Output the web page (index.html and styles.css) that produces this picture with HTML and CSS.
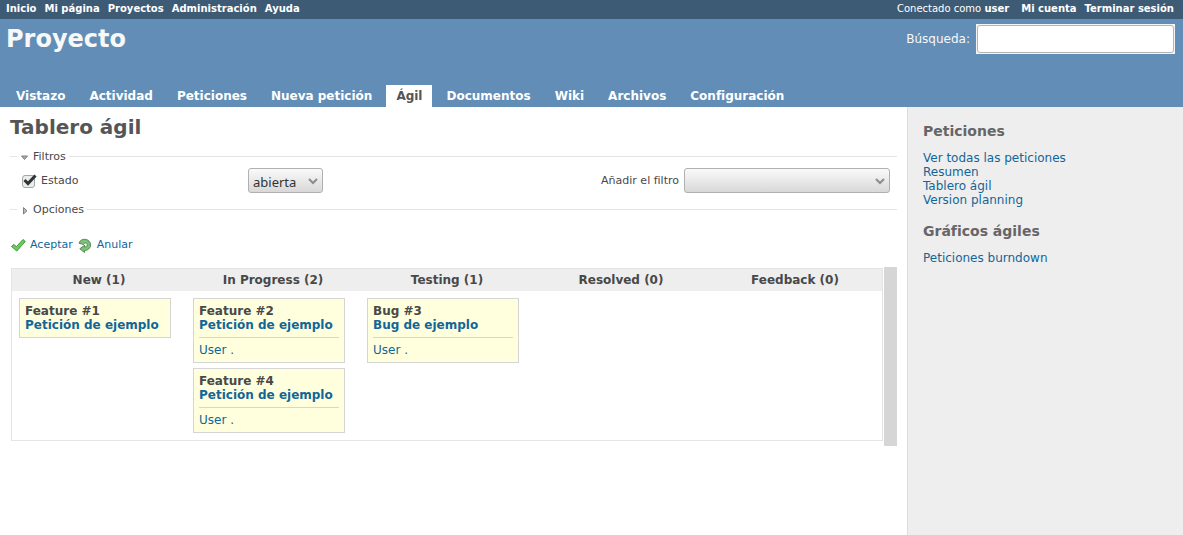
FILE: index.html
```html
<!DOCTYPE html>
<html lang="es">
<head>
<meta charset="utf-8">
<title>Tablero ágil - Proyecto</title>
<link rel="stylesheet" href="styles.css">
</head>
<body>
<nav class="top-menu">
  <ul class="menu-links">
    <li><a href="#">Inicio</a></li>
    <li><a href="#">Mi página</a></li>
    <li><a href="#">Proyectos</a></li>
    <li><a href="#">Administración</a></li>
    <li><a href="#">Ayuda</a></li>
  </ul>
  <div class="account">
    <span class="logged-as">Conectado como <a href="#">user</a></span>
    <ul class="menu-links">
      <li><a href="#">Mi cuenta</a></li>
      <li><a href="#">Terminar sesión</a></li>
    </ul>
  </div>
</nav>
<header class="header">
  <div class="header-row">
    <h1>Proyecto</h1>
    <form class="search">
      <label for="q">Búsqueda:</label>
      <span class="search-frame"><input id="q" type="text"></span>
    </form>
  </div>
  <nav>
    <ul class="tabs">
      <li><a href="#">Vistazo</a></li>
      <li><a href="#">Actividad</a></li>
      <li><a href="#">Peticiones</a></li>
      <li><a href="#">Nueva petición</a></li>
      <li><a href="#" class="selected">Ágil</a></li>
      <li><a href="#">Documentos</a></li>
      <li><a href="#">Wiki</a></li>
      <li><a href="#">Archivos</a></li>
      <li><a href="#">Configuración</a></li>
    </ul>
  </nav>
</header>
<div class="main">
  <main class="content">
    <h2>Tablero ágil</h2>
    <form>
      <fieldset class="filters">
        <legend>
          <svg width="9" height="10" viewBox="0 0 9 10"><path d="M1.500 4H7.500L4.500 7.500Z" fill="#aaa" stroke="#808080" stroke-width="1"/></svg>
          Filtros
        </legend>
        <div class="filter-row">
          <div class="filter-name">
            <span class="check">
              <input type="checkbox" id="estado" checked>
              <svg width="16" height="14" viewBox="0 0 16 14"><path d="M3.500 6L7 9.500L14.500 1.500" fill="none" stroke="#2e3436" stroke-width="3"/></svg>
            </span>
            <label for="estado">Estado</label>
          </div>
          <span class="select-box">
            <select class="value" aria-label="Estado"><option>abierta</option></select>
            <svg width="10" height="7" viewBox="0 0 10 7"><path d="M1 1L5 5L9 1" fill="none" stroke="#8b8d8c" stroke-width="2"/></svg>
          </span>
          <div class="add-filter">
            <label for="add">Añadir el filtro</label>
            <span class="select-box">
              <select id="add" class="add"><option></option></select>
              <svg width="10" height="7" viewBox="0 0 10 7"><path d="M1 1L5 5L9 1" fill="none" stroke="#8b8d8c" stroke-width="2"/></svg>
            </span>
          </div>
        </div>
      </fieldset>
      <fieldset class="options">
        <legend>
          <svg width="9" height="10" viewBox="0 0 9 10"><path d="M3.500 2.500V9L7 5.800Z" fill="#bbb" stroke="#808080" stroke-width="1"/></svg>
          Opciones
        </legend>
      </fieldset>
      <p class="buttons">
        <a href="#"><svg width="16" height="16" viewBox="0 0 16 16"><path d="M1.500 9.500L3.500 7.500L6.500 9.500L13 2.500L15.300 4.500L6.800 14Z" fill="#6ccb60" stroke="#3f9a3b" stroke-width="1" stroke-linejoin="round"/></svg>Aceptar</a>
        <a href="#"><svg width="16" height="16" viewBox="0 0 16 16"><path d="M2 6.200C3.500 0.500 13.500 1 13.500 8C13.500 11.500 10.500 13.500 7.500 13.500V15.500L2.800 11.800L7.500 8.200V10C9 10 10.200 9.300 10.200 7.800C10.200 5.500 7.500 5.500 6.500 7.500Z" fill="#82bd80" stroke="#4c8f4c" stroke-width="1" stroke-linejoin="round"/></svg>Anular</a>
      </p>
    </form>
    <div class="board-scroll">
      <div class="board-frame">
        <table class="board">
          <thead>
            <tr><th>New (1)</th><th>In Progress (2)</th><th>Testing (1)</th><th>Resolved (0)</th><th>Feedback (0)</th></tr>
          </thead>
          <tbody>
            <tr>
              <td>
                <article class="card"><h4>Feature #1</h4><a class="subject" href="#">Petición de ejemplo</a></article>
              </td>
              <td>
                <article class="card"><h4>Feature #2</h4><a class="subject" href="#">Petición de ejemplo</a><p class="user"><a href="#">User .</a></p></article>
                <article class="card"><h4>Feature #4</h4><a class="subject" href="#">Petición de ejemplo</a><p class="user"><a href="#">User .</a></p></article>
              </td>
              <td>
                <article class="card"><h4>Bug #3</h4><a class="subject" href="#">Bug de ejemplo</a><p class="user"><a href="#">User .</a></p></article>
              </td>
              <td></td>
              <td></td>
            </tr>
          </tbody>
        </table>
      </div>
      <div class="scroll-track"></div>
    </div>
  </main>
  <aside class="sidebar">
    <h3>Peticiones</h3>
    <ul>
      <li><a href="#">Ver todas las peticiones</a></li>
      <li><a href="#">Resumen</a></li>
      <li><a href="#">Tablero ágil</a></li>
      <li><a href="#">Version planning</a></li>
    </ul>
    <h3>Gráficos ágiles</h3>
    <ul>
      <li><a href="#">Peticiones burndown</a></li>
    </ul>
  </aside>
</div>
</body>
</html>
```

FILE: styles.css
```css
* { box-sizing: border-box; }
body {
  margin: 0;
  min-height: 100vh;
  display: flex;
  flex-direction: column;
  font: 12px/14px "DejaVu Sans", Verdana, sans-serif;
  color: #484848;
  background: #fff;
}
h1, h2, h3, h4, p, ul { margin: 0; padding: 0; }
ul { list-style: none; }
a { color: #169; text-decoration: none; }
svg { flex: none; }
input, select { font: inherit; color: #2e3436; }

.top-menu {
  display: flex;
  justify-content: space-between;
  height: 19px;
  padding: 2px 9px 0 6px;
  background: #3e5b76;
  color: #fff;
  font-size: 10px;
}
.top-menu a { color: #fff; font-weight: bold; }
.menu-links { display: flex; gap: 8px; }
.account { display: flex; gap: 12px; }

.header {
  display: flex;
  flex-direction: column;
  justify-content: space-between;
  height: 88px;
  background: #628db6;
  color: #f8f8f8;
}
.header-row {
  display: flex;
  justify-content: space-between;
  padding: 5px 8px 0 6px;
}
h1 { font-size: 24px; line-height: 30px; }
.search { display: flex; gap: 6px; }
.search label { line-height: 30px; }
.search-frame { padding: 1px; background: #f4f4f4; height: 30px; }
.search input {
  width: 197px;
  height: 28px;
  border: 1px solid #b4b4b0;
  border-radius: 3px;
  background: #fff;
}
.tabs { display: flex; gap: 4px; padding-left: 6px; }
.tabs a {
  display: block;
  padding: 4px 10px;
  color: #fff;
  font-weight: bold;
}
.tabs .selected { background: #fff; color: #555; }

.main { display: flex; flex: 1; }
.content { flex: 1; min-width: 0; padding: 6px 10px 10px; }
h2 { font-size: 20px; line-height: 28px; color: #555; }

fieldset {
  margin: 0;
  padding: 0 7px 0 11px;
  min-width: 0;
  border: 0;
  border-top: 1px solid #e4e4e4;
  font-size: 11px;
}
legend {
  display: flex;
  align-items: center;
  gap: 4px;
  margin-left: -4px;
  padding: 1px 3px 0;
}
.filters { margin-top: 8px; }
.options { margin-top: 9px; }
.filter-row { display: flex; align-items: center; padding-top: 4px; }
.filter-name { display: flex; align-items: center; gap: 4px; width: 227px; }
.check { position: relative; display: flex; width: 16px; height: 14px; }
.check input {
  appearance: none;
  width: 13px;
  height: 13px;
  margin: 1px;
  border: 1px solid #a6a6a6;
  border-radius: 3px;
  background: #ececec;
}
.check svg { position: absolute; left: 0; top: 0; pointer-events: none; }
.select-box { position: relative; display: flex; }
.select-box svg { position: absolute; right: 5px; top: 10px; pointer-events: none; }
select {
  appearance: none;
  height: 25px;
  margin: 0;
  padding: 3px 4px 0;
  border: 1px solid #b0b0b0;
  border-radius: 3px;
  background: linear-gradient(#fafafa, #d8d8d8);
  font-family: "Noto Sans", sans-serif;
  font-size: 13px;
}
.value { width: 75px; }
.add { width: 206px; }
.add-filter { display: flex; align-items: center; gap: 5px; margin-left: auto; }

.buttons { display: flex; gap: 4px; margin-top: 20px; font-size: 11px; }
.buttons a { display: flex; align-items: center; gap: 4px; }

.board-scroll { display: flex; margin-top: 14px; }
.board-frame { flex: 1; padding: 1px 1px 5px; }
.board {
  width: 100%;
  table-layout: fixed;
  border: 1px solid #e4e4e4;
  border-spacing: 0;
}
.board th { height: 22px; padding: 0; background: #eee; font-size: 12px; }
.board td { padding: 7px 15px 7px 7px; vertical-align: top; }
.scroll-track { width: 13px; background: #d6d6d6; }
.card {
  padding: 5px;
  border: 1px solid #d5d5d5;
  background: #ffffdd;
}
.card + .card { margin-top: 5px; }
.card h4 { font-size: 12px; }
.subject { display: block; font-weight: bold; }
.user { margin-top: 5px; padding-top: 5px; border-top: 1px solid #d5d5d5; }

.sidebar {
  width: 276px;
  padding: 14px 15px;
  border-left: 1px solid #ddd;
  background: #eee;
}
h3 { font-size: 14px; line-height: 20px; color: #666; }
.sidebar ul { margin: 10px 0 14px; }
```
